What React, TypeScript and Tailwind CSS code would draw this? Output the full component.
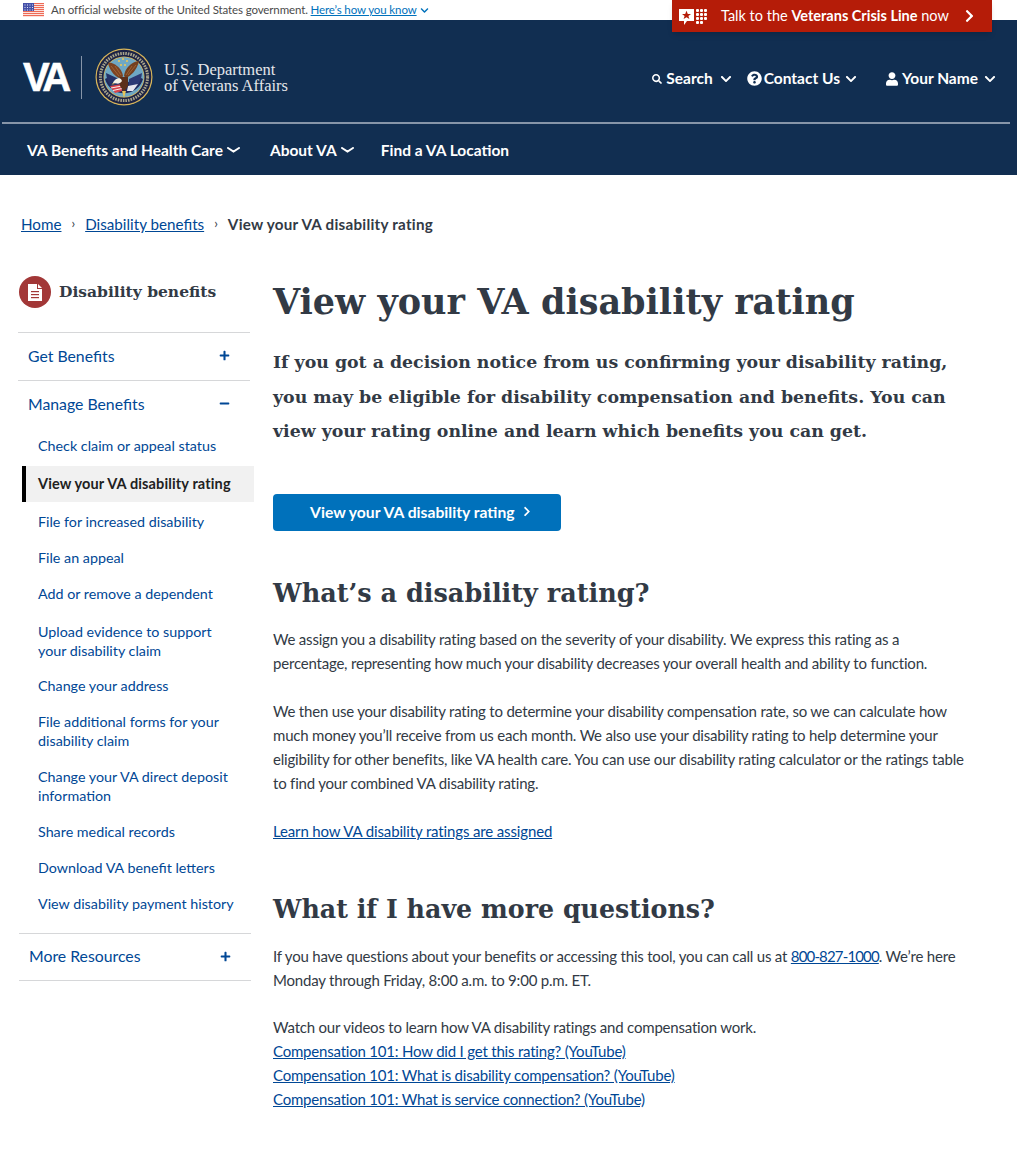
import React from "react";
import { FaChevronDown, FaChevronRight, FaQuestionCircle, FaUser, FaSearch, FaPlus, FaMinus } from "react-icons/fa";

const sans = "font-['Source_Sans_Pro','Lato','Noto_Sans',sans-serif]";
const serif = "font-['DejaVu_Serif',serif]";

function Flag() {
  return (
    <svg width="21" height="14" viewBox="0 0 21 14" className="shrink-0">
      <rect width="21" height="14" fill="#fff" />
      {[0, 2, 4, 6, 8, 10, 12].map((y) => (
        <rect key={y} y={y} width="21" height="1.2" fill="#ee6a55" />
      ))}
      <rect width="11" height="8" fill="#4450a8" />
      {[1.5, 4, 6.5, 9].map((x) =>
        [1.5, 4, 6.5].map((y) => <rect key={`${x}-${y}`} x={x} y={y} width="1" height="1" fill="#dfe3f5" />)
      )}
    </svg>
  );
}

function Seal() {
  return (
    <svg width="58" height="58" viewBox="0 0 58 58" className="shrink-0">
      <circle cx="29" cy="29" r="28.5" fill="#d9b65a" />
      <circle cx="29" cy="29" r="27.3" fill="#1b2245" />
      <circle cx="29" cy="29" r="23.6" fill="none" stroke="#a9a48a" strokeWidth="3" strokeDasharray="1.6 1" />
      <circle cx="29" cy="29" r="20.5" fill="#d9b65a" />
      <circle cx="29" cy="29" r="19.8" fill="#6fa8c4" />
      <path d="M10 31 C14 28 22 30 29 38 C36 30 44 28 48 31 A19.8 19.8 0 0 1 10 31Z" fill="#1f2a5c" />
      <path d="M11 25 L24 31 L24 43 C18 42 12 36 11 25Z" fill="#243268" />
      <path d="M47 25 L34 31 L34 43 C40 42 46 36 47 25Z" fill="#2c3a74" />
      <path d="M15 38 L27 36 L27 43 L20 45Z" fill="#d8434a" />
      <path d="M16 40 L27 38 M18 42.5 L27 40.5" stroke="#fff" strokeWidth="0.9" />
      <path d="M43 36 L33 38 L32 43 L38 43Z" fill="#e7e7ee" />
      <path d="M26 31 C21 29 15 24 13 15 C14.5 14.5 17 15 19 16 C23 18 27 22 28 28Z" fill="#7c4322" />
      <path d="M31 30 C36 28 42 22 44 13 C42 13 39 14 37 15.5 C33 18 30 22 29 28Z" fill="#74401f" />
      <path d="M16 18 L24 28 M20 18 L26 27 M41 17 L33 27 M37 18 L31 27" stroke="#a86c3a" strokeWidth="0.8" />
      <path d="M25 29 L33 29 L33 38 L29 44 L25 38Z" fill="#5b2f1a" />
      <path d="M26 31 C23 29 19 32 18 35 L22 35.5 C23 36 26 35 27 33Z" fill="#f4f1e6" />
      <path d="M18 35 L16.5 36.5 L20 36Z" fill="#e8c65a" />
      <path d="M27 43 L31 43 L29 50Z" fill="#e8c65a" />
      {[
        [24, 13],
        [28, 11],
        [32, 13],
        [26, 17],
        [30, 17],
      ].map(([x, y]) => (
        <circle key={`${x}-${y}`} cx={x} cy={y} r="1.1" fill="#e8c65a" />
      ))}
    </svg>
  );
}

function CrisisIcon() {
  return (
    <svg width="29" height="17" viewBox="0 0 29 17" className="shrink-0">
      <path d="M0 1 H15 V13 H8 L5 17 V13 H0Z" fill="#fff" />
      <path d="M7.5 2.8 L8.8 6 H12 L9.4 8 L10.4 11 L7.5 9.2 L4.6 11 L5.6 8 L3 6 H6.2Z" fill="#b51c08" />
      {[17, 21, 25].map((x) =>
        [1, 5, 9, 13].map((y) =>
          y === 13 && x === 25 ? null : <rect key={`${x}-${y}`} x={x} y={y} width="3" height="3" rx="1" fill="#fff" />
        )
      )}
    </svg>
  );
}

function TopLink({ icon, label, className, chevron }: { icon: React.ReactNode; label: string; className?: string; chevron: string }) {
  return (
    <button className={`flex items-center font-bold text-white text-[15.5px] ${className ?? ""}`}>
      {icon}
      <span>{label}</span>
      <FaChevronDown className={`${chevron} w-[12px] h-[12px]`} />
    </button>
  );
}

function NavCaret() {
  return (
    <svg width="13" height="6" viewBox="0 0 13 6" className="ml-[4px] mt-[-2px]">
      <path d="M1 1 L6.5 4.5 L12 1" fill="none" stroke="#fff" strokeWidth="2" strokeLinecap="round" />
    </svg>
  );
}

function SubLink({ children, className }: { children: React.ReactNode; className?: string }) {
  return (
    <a href="#" className={`block pl-[20px] pr-[18px] text-[#004795] text-[14.3px] leading-[19px] ${className ?? ""}`}>
      {children}
    </a>
  );
}

function Sidebar() {
  return (
    <aside className="w-[255px] shrink-0 pl-[18px] text-[#004795]">
      <div className="flex items-center gap-[8px] h-[32px] mt-[1px]">
        <div className="w-[32px] h-[32px] ml-[1px] rounded-full bg-[#a23737] flex items-center justify-center">
          <svg width="14" height="17" viewBox="0 0 14 17">
            <path d="M0 0 H9 V5 H14 V17 H0Z" fill="#fff" />
            <path d="M10 0 L14 4 H10Z" fill="#fff" />
            <rect x="3" y="7" width="8" height="1.2" fill="#a23737" />
            <rect x="3" y="10" width="8" height="1.2" fill="#a23737" />
            <rect x="3" y="13" width="8" height="1.2" fill="#a23737" />
          </svg>
        </div>
        <div className={`${serif} font-bold text-[#323a45] text-[15.5px]`}>Disability benefits</div>
      </div>

      <div className="mt-[24px] w-[232px] border-t border-[#d6d7d9]">
        <div className="h-[47px] pb-[2px] flex items-center justify-between pl-[10px] pr-[20px] text-[15.8px]">
          <span>Get Benefits</span>
          <FaPlus className="w-[11px] h-[11px]" />
        </div>
      </div>
      <div className="w-[232px] border-t border-[#d6d7d9]">
        <div className="h-[47px] pb-[2px] flex items-center justify-between pl-[10px] pr-[20px] text-[15.8px]">
          <span>Manage Benefits</span>
          <FaMinus className="w-[11px] h-[11px]" />
        </div>
      </div>

      <div>
        <SubLink className="pt-[8px] pb-[11px]">Check claim or appeal status</SubLink>
        <div className="ml-[4px] w-[232px] h-[36px] flex items-center bg-[#f1f1f1] border-l-4 border-black pl-[12px] font-bold text-[14.5px] tracking-[0.13px] text-[#212121]">
          View your VA disability rating
        </div>
        <SubLink className="pt-[10px] pb-[9px]">File for increased disability</SubLink>
        <SubLink className="pt-[8px] pb-[9px]">File an appeal</SubLink>
        <SubLink className="pt-[8px] pb-[9px]">Add or remove a dependent</SubLink>
        <SubLink className="pt-[10px] pb-[8px]">
          Upload evidence to support
          <br />
          your disability claim
        </SubLink>
        <SubLink className="pt-[8px] pb-[8px]">Change your address</SubLink>
        <SubLink className="pt-[9px] pb-[8px]">
          File additional forms for your
          <br />
          disability claim
        </SubLink>
        <SubLink className="pt-[9px] pb-[8px]">
          Change your VA direct deposit
          <br />
          information
        </SubLink>
        <SubLink className="pt-[9px] pb-[8px]">Share medical records</SubLink>
        <SubLink className="pt-[9px] pb-[8px]">Download VA benefit letters</SubLink>
        <SubLink className="pt-[9px] pb-[8px]">View disability payment history</SubLink>
      </div>

      <div className="mt-[12px] ml-[1px] w-[232px] border-t border-b border-[#d6d7d9]">
        <div className="h-[46px] pb-[2px] flex items-center justify-between pl-[10px] pr-[20px] text-[15.8px]">
          <span>More Resources</span>
          <FaPlus className="w-[11px] h-[11px]" />
        </div>
      </div>
    </aside>
  );
}

function Link({ children, className }: { children: React.ReactNode; className?: string }) {
  return (
    <a href="#" className={`text-[#004795] underline ${className ?? ""}`}>
      {children}
    </a>
  );
}

export default function App() {
  return (
    <div className={`${sans} relative w-[1017px] h-[1155px] bg-white text-[#323a45] overflow-hidden`}>
      {/* gov banner */}
      <div className="h-[20px] flex items-center pl-[23px] gap-[7px] text-[11.5px] tracking-[-0.12px] text-[#4a4a4a]">
        <Flag />
        <span>
          An official website of the United States government.{" "}
          <a href="#" className="text-[#0071bb] underline">
            Here’s how you know
          </a>
        </span>
        <FaChevronDown className="w-[9px] h-[9px] text-[#0071bb] ml-[-4px]" />
      </div>

      <div className="absolute top-0 left-[672px] w-[320px] h-[32px] bg-[#b51c08] shadow-md flex items-center pl-[7px] text-white z-10">
        <CrisisIcon />
        <span className="ml-[13px] text-[14.5px] whitespace-nowrap">
          Talk to the <b className="font-bold">Veterans Crisis Line</b> now
        </span>
        <FaChevronRight className="absolute right-[16px] top-[9px] w-[13px] h-[14px]" />
      </div>

      {/* header */}
      <header className="bg-[#112e51] h-[155px] text-white">
        <div className="h-[102px] flex items-start">
          <div className="flex items-center pl-[23px] pt-[28px]">
            <div className="font-['Liberation_Sans',sans-serif] font-bold text-[40px] leading-[44px] tracking-[-4.5px] w-[48px] [-webkit-text-stroke:0.6px_white]">VA</div>
            <div className="w-px h-[43px] bg-[#8795a8] ml-[10px] mr-[13px]" />
            <Seal />
            <div className="ml-[11px] pt-[2px] font-['Liberation_Serif',serif] text-[#e4e6ea] text-[16.5px] leading-[16px]">
              U.S. Department
              <br />
              of Veterans Affairs
            </div>
          </div>
          <div className="ml-auto flex items-center pt-[47px] pr-[21px]">
            <TopLink chevron="ml-[7px]" icon={<FaSearch className="w-[10px] h-[10px] mr-[4px]" />} label="Search" />
            <TopLink chevron="ml-[5px]" className="ml-[15px]" icon={<FaQuestionCircle className="w-[15px] h-[15px] mr-[2px]" />} label="Contact Us" />
            <TopLink chevron="ml-[6px]" className="ml-[29px]" icon={<FaUser className="w-[12px] h-[14px] mr-[4px]" />} label="Your Name" />
          </div>
        </div>
        <div className="ml-[2px] w-[1008px] h-[2px] bg-[#8795a8]" />
        <nav className="h-[51px] flex items-center pl-[27px] font-bold text-[15.5px] pt-[3px]">
          <span>VA Benefits and Health Care</span>
          <NavCaret />
          <span className="ml-[30px]">About VA</span>
          <NavCaret />
          <span className="ml-[27px]">Find a VA Location</span>
        </nav>
      </header>

      {/* breadcrumbs */}
      <div className="mt-[39px] h-[20px] pl-[21px] flex items-center text-[15.2px]">
        <Link>Home</Link>
        <span className="mx-[10px] text-[13px]">›</span>
        <Link>Disability benefits</Link>
        <span className="mx-[10px] text-[13px]">›</span>
        <b className="tracking-[0.25px]">View your VA disability rating</b>
      </div>

      <div className="flex mt-[41px]">
        <Sidebar />
        <main className="pl-[18px] w-[744px] text-[15px] tracking-[-0.2px] leading-[24px]">
          <h1 className={`${serif} font-bold text-[35px] tracking-normal leading-[44px] mt-[5px]`}>View your VA disability rating</h1>
          <p className={`${serif} font-bold text-[17.35px] tracking-normal leading-[34.5px] mt-[21px]`}>
            If you got a decision notice from us confirming your disability rating,
            <br />
            you may be eligible for disability compensation and benefits. You can
            <br />
            view your rating online and learn which benefits you can get.
          </p>
          <button className="mt-[45px] w-[288px] h-[37px] pl-[37px] pb-[1px] bg-[#0071bb] rounded-[4px] text-white font-bold text-[15.7px] tracking-normal flex items-center">
            View your VA disability rating
            <FaChevronRight className="ml-[7px] w-[10px] h-[11px]" />
          </button>
          <h2 className={`${serif} font-bold text-[25.5px] tracking-normal leading-[36px] mt-[44px]`}>What’s a disability rating?</h2>
          <p className="mt-[16px]">
            We assign you a disability rating based on the severity of your disability. We express this rating as a
            <br />
            percentage, representing how much your disability decreases your overall health and ability to function.
          </p>
          <p className="mt-[24px]">
            We then use your disability rating to determine your disability compensation rate, so we can calculate how
            <br />
            much money you’ll receive from us each month. We also use your disability rating to help determine your
            <br />
            eligibility for other benefits, like VA health care. You can use our disability rating calculator or the ratings table
            <br />
            to find your combined VA disability rating.
          </p>
          <p className="mt-[24px]">
            <Link className="tracking-[-0.14px]">Learn how VA disability ratings are assigned</Link>
          </p>
          <h2 className={`${serif} font-bold text-[25.3px] tracking-normal leading-[36px] mt-[48px]`}>What if I have more questions?</h2>
          <p className="mt-[17px]">
            If you have questions about your benefits or accessing this tool, you can call us at{" "}
            <Link className="tracking-[-0.85px]">800-827-1000</Link>. We’re here
            <br />
            Monday through Friday, 8:00 a.m. to 9:00 p.m. ET.
          </p>
          <p className="mt-[23px]">
            Watch our videos to learn how VA disability ratings and compensation work.
            <br />
            <Link>Compensation 101: How did I get this rating? (YouTube)</Link>
            <br />
            <Link>Compensation 101: What is disability compensation? (YouTube)</Link>
            <br />
            <Link>Compensation 101: What is service connection? (YouTube)</Link>
          </p>
        </main>
      </div>
    </div>
  );
}
